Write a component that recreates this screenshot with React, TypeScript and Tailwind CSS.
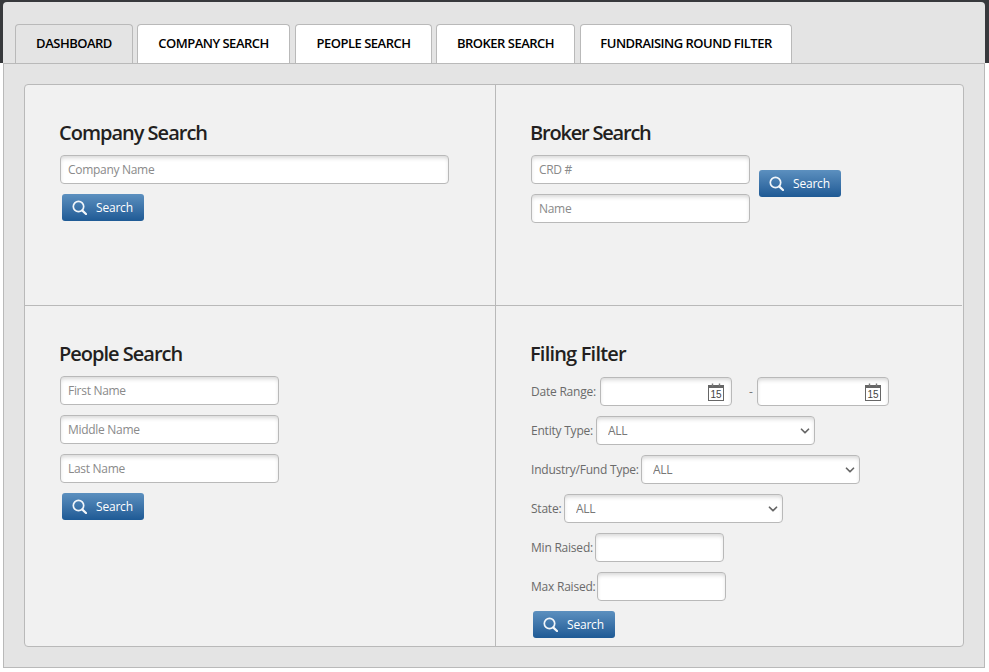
import React from "react";
import { ChevronDown } from "lucide-react";

const font = "font-['Open_Sans',sans-serif]";

const TABS = [
  { label: "DASHBOARD", cls: "w-[118px] mr-[4px]", active: true },
  { label: "COMPANY SEARCH", cls: "w-[153px] mr-[5px]" },
  { label: "PEOPLE SEARCH", cls: "w-[137px] mr-[4px]" },
  { label: "BROKER SEARCH", cls: "w-[139px] mr-[5px]" },
  { label: "FUNDRAISING ROUND FILTER", cls: "w-[212px]" },
];

const fieldClass =
  "h-[29px] rounded-[4px] border border-[#b9b9b9] bg-white px-[7px] text-[12px] tracking-[-0.3px] text-[#777] placeholder:text-[#8a8a8a] shadow-[inset_0_3px_4px_-1px_rgba(0,0,0,0.16)] outline-none";

const SearchButton = ({ className = "" }: { className?: string }) => (
  <button className={`flex h-[27px] w-[82px] items-center rounded-[3px] bg-gradient-to-b from-[#5c90bf] to-[#1e5a95] pl-[10px] text-[12px] tracking-[-0.2px] text-white ${className}`}>
    <svg width="15" height="15" viewBox="0 0 15 15" fill="none" stroke="#f2f6fa" className="mr-[9px] shrink-0">
      <circle cx="6.5" cy="6.5" r="5.2" strokeWidth="1.7" />
      <path d="M10.4 10.6 L14 14" strokeWidth="2.2" strokeLinecap="round" />
    </svg>
    Search
  </button>
);

const Heading = ({ children, className = "" }: { children: React.ReactNode; className?: string }) => (
  <h2 className={`mb-[8px] -ml-[1px] h-[28px] text-[20px] leading-[28px] font-semibold text-[#231f20] ${className}`}>
    {children}
  </h2>
);

// small calendar glyph: thin top band, two rings, number inside
const CalendarIcon = () => (
  <svg width="16" height="18" viewBox="0 0 16 18" className="absolute top-[6px] right-[8px]">
    <rect x="0.5" y="2.5" width="15" height="15" fill="#fff" stroke="#666" />
    <rect x="0.5" y="2.5" width="15" height="2.5" fill="#666" />
    <path d="M4.5 0.5v3M11.5 0.5v3" stroke="#777" strokeWidth="1.4" />
    <text x="8" y="15" textAnchor="middle" fontSize="10" fill="#444" fontFamily="Liberation Sans, sans-serif">15</text>
  </svg>
);

const DateInput = ({ className = "" }: { className?: string }) => (
  <div className={`relative ${className}`}>
    <input className={`${fieldClass} block w-[132px]`} />
    <CalendarIcon />
  </div>
);

const SelectField = ({ className = "" }: { className?: string }) => (
  <div className={`relative ${className}`}>
    <select className={`${fieldClass} block w-[219px] appearance-none pl-[11px]`}>
      <option>ALL</option>
    </select>
    <ChevronDown size={14} strokeWidth={3} className="pointer-events-none absolute top-[8px] right-[3px] text-[#666]" />
  </div>
);

const Label = ({ children, className = "" }: { children: React.ReactNode; className?: string }) => (
  <label className={`pl-[1px] text-[12px] tracking-[-0.22px] whitespace-nowrap text-[#6a6a6a] ${className}`}>{children}</label>
);

const Row = ({ children }: { children: React.ReactNode }) => (
  <div className="mb-[10px] -ml-[1px] flex h-[29px] items-center">{children}</div>
);

export default function App() {
  return (
    <div className={`${font} h-[672px] overflow-hidden bg-[linear-gradient(#37393c_63px,#ffffff_63px)] pt-[2px] pr-[4px] pl-[3px]`}>
      <div className="flex h-[61px] items-end rounded-t-[4px] bg-[#e4e4e4] pl-[12px]">
        {TABS.map((t) => (
          <div
            key={t.label}
            className={`${t.cls} flex h-[39px] items-center justify-center rounded-t-[4px] border border-b-0 border-[#b9b9b9] text-[13px] font-semibold tracking-[-0.5px] text-black ${t.active ? "bg-[#e4e4e4]" : "bg-white"}`}
          >
            {t.label}
          </div>
        ))}
      </div>

      <div className="h-[605px] border border-[#b9b9b9] bg-[#e4e4e4] px-[20px] pt-[20px]">
        <div className="grid h-[563px] w-[940px] grid-cols-[471px_467px] grid-rows-[221px_340px] rounded-[4px] border border-[#b9b9b9] bg-[#f1f1f1]">
          <section className="border-r border-b border-[#b9b9b9] pt-[34px] pl-[35px]">
            <Heading className="tracking-[-1px]">Company Search</Heading>
            <input placeholder="Company Name" className={`${fieldClass} block w-[389px]`} />
            <SearchButton className="mt-[10px] ml-[2px]" />
          </section>

          <section className="mr-[1px] border-b border-[#b9b9b9] pt-[34px] pl-[35px]">
            <Heading className="tracking-[-1.2px]">Broker Search</Heading>
            <div className="flex items-start">
              <div className="flex flex-col gap-[10px]">
                <input placeholder="CRD #" className={`${fieldClass} w-[219px]`} />
                <input placeholder="Name" className={`${fieldClass} w-[219px]`} />
              </div>
              <SearchButton className="mt-[15px] ml-[9px]" />
            </div>
          </section>

          <section className="border-r border-[#b9b9b9] pt-[34px] pl-[35px]">
            <Heading className="tracking-[-1px]">People Search</Heading>
            <div className="flex flex-col gap-[10px]">
              <input placeholder="First Name" className={`${fieldClass} w-[219px]`} />
              <input placeholder="Middle Name" className={`${fieldClass} w-[219px]`} />
              <input placeholder="Last Name" className={`${fieldClass} w-[219px]`} />
            </div>
            <SearchButton className="mt-[10px] ml-[2px]" />
          </section>

          <section className="pt-[34px] pl-[35px]">
            <Heading className="tracking-[-0.8px]">Filing Filter</Heading>
            <div className="pt-[1px]">
              <Row>
                <Label className="w-[70px]">Date Range:</Label>
                <DateInput />
                <span className="mr-[4px] ml-[17px] text-[12px] text-[#777]">-</span>
                <DateInput />
              </Row>
              <Row>
                <Label className="w-[66px]">Entity Type:</Label>
                <SelectField />
              </Row>
              <Row>
                <Label className="w-[111px]">Industry/Fund Type:</Label>
                <SelectField />
              </Row>
              <Row>
                <Label className="w-[34px]">State:</Label>
                <SelectField />
              </Row>
              <Row>
                <Label className="w-[65px]">Min Raised:</Label>
                <input className={`${fieldClass} w-[129px]`} />
              </Row>
              <Row>
                <Label className="w-[67px]">Max Raised:</Label>
                <input className={`${fieldClass} w-[129px]`} />
              </Row>
            </div>
            <SearchButton className="ml-[2px]" />
          </section>
        </div>
      </div>
    </div>
  );
}
